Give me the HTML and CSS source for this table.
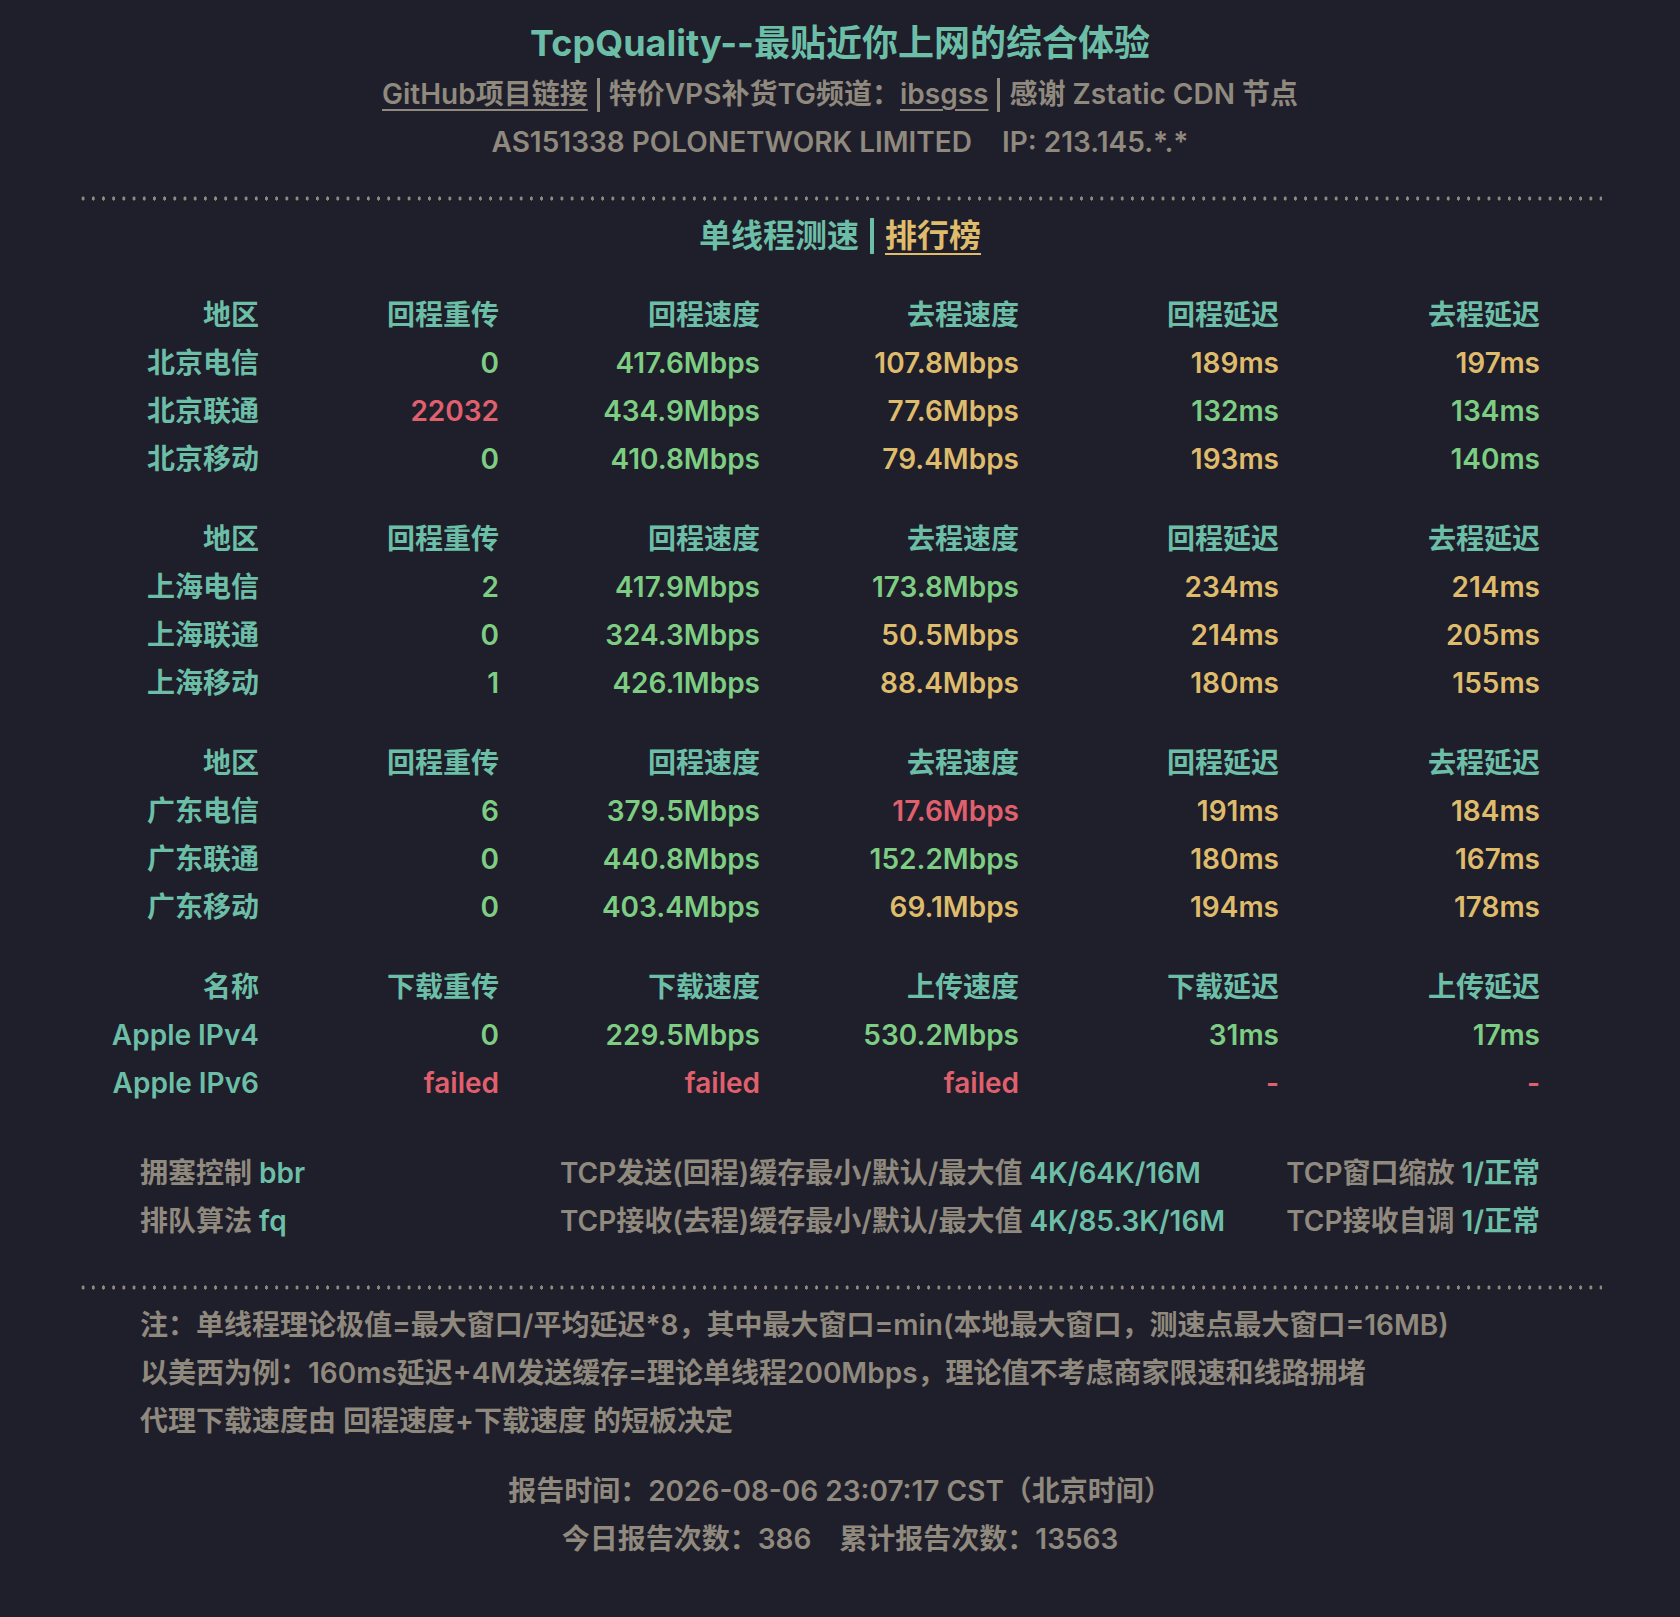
FILE: index.html
```html
<!DOCTYPE html>
<html lang="zh-CN">
<head>
<meta charset="utf-8">
<title>TcpQuality</title>
<link rel="stylesheet" href="styles.css">
</head>
<body>
<div class="page">
  <header class="head">
    <h1 class="title">TcpQuality--最贴近你上网的综合体验</h1>
    <p class="links"><a class="ulink">GitHub项目链接</a><span class="bar"></span>特价VPS补货TG频道：<a class="ulink">ibsgss</a><span class="bar"></span>感谢 Zstatic CDN 节点</p>
    <p class="asline">AS151338 POLONETWORK LIMITED<span class="ip">IP: 213.145.*.*</span></p>
  </header>

  <div class="dots"></div>

  <div class="tabs"><span class="tab">单线程测速</span><span class="tabbar"></span><a class="tab rank">排行榜</a></div>

  <section class="grid">
    <div class="h">地区</div><div class="h">回程重传</div><div class="h">回程速度</div><div class="h">去程速度</div><div class="h">回程延迟</div><div class="h">去程延迟</div>
    <div class="l">北京电信</div><div class="g">0</div><div class="g">417.6Mbps</div><div class="y">107.8Mbps</div><div class="y">189ms</div><div class="y">197ms</div>
    <div class="l">北京联通</div><div class="r">22032</div><div class="g">434.9Mbps</div><div class="y">77.6Mbps</div><div class="g">132ms</div><div class="g">134ms</div>
    <div class="l">北京移动</div><div class="g">0</div><div class="g">410.8Mbps</div><div class="y">79.4Mbps</div><div class="y">193ms</div><div class="g">140ms</div>
  </section>

  <section class="grid">
    <div class="h">地区</div><div class="h">回程重传</div><div class="h">回程速度</div><div class="h">去程速度</div><div class="h">回程延迟</div><div class="h">去程延迟</div>
    <div class="l">上海电信</div><div class="g">2</div><div class="g">417.9Mbps</div><div class="g">173.8Mbps</div><div class="y">234ms</div><div class="y">214ms</div>
    <div class="l">上海联通</div><div class="g">0</div><div class="g">324.3Mbps</div><div class="y">50.5Mbps</div><div class="y">214ms</div><div class="y">205ms</div>
    <div class="l">上海移动</div><div class="g">1</div><div class="g">426.1Mbps</div><div class="y">88.4Mbps</div><div class="y">180ms</div><div class="y">155ms</div>
  </section>

  <section class="grid">
    <div class="h">地区</div><div class="h">回程重传</div><div class="h">回程速度</div><div class="h">去程速度</div><div class="h">回程延迟</div><div class="h">去程延迟</div>
    <div class="l">广东电信</div><div class="g">6</div><div class="g">379.5Mbps</div><div class="r">17.6Mbps</div><div class="y">191ms</div><div class="y">184ms</div>
    <div class="l">广东联通</div><div class="g">0</div><div class="g">440.8Mbps</div><div class="g">152.2Mbps</div><div class="y">180ms</div><div class="y">167ms</div>
    <div class="l">广东移动</div><div class="g">0</div><div class="g">403.4Mbps</div><div class="y">69.1Mbps</div><div class="y">194ms</div><div class="y">178ms</div>
  </section>

  <section class="grid last">
    <div class="h">名称</div><div class="h">下载重传</div><div class="h">下载速度</div><div class="h">上传速度</div><div class="h">下载延迟</div><div class="h">上传延迟</div>
    <div class="l">Apple IPv4</div><div class="g">0</div><div class="g">229.5Mbps</div><div class="g">530.2Mbps</div><div class="g">31ms</div><div class="g">17ms</div>
    <div class="l">Apple IPv6</div><div class="r">failed</div><div class="r">failed</div><div class="r">failed</div><div class="r">-</div><div class="r">-</div>
  </section>

  <section class="conf">
    <div>拥塞控制 <span class="v">bbr</span></div>
    <div>TCP发送(回程)缓存最小/默认/最大值 <span class="v">4K/64K/16M</span></div>
    <div class="rc">TCP窗口缩放 <span class="v">1/正常</span></div>
    <div>排队算法 <span class="v">fq</span></div>
    <div>TCP接收(去程)缓存最小/默认/最大值 <span class="v">4K/85.3K/16M</span></div>
    <div class="rc">TCP接收自调 <span class="v">1/正常</span></div>
  </section>

  <div class="dots"></div>

  <section class="notes">
    <p>注：单线程理论极值=最大窗口/平均延迟*8，其中最大窗口=min(本地最大窗口，测速点最大窗口=16MB)</p>
    <p>以美西为例：160ms延迟+4M发送缓存=理论单线程200Mbps，理论值不考虑商家限速和线路拥堵</p>
    <p>代理下载速度由 回程速度+下载速度 的短板决定</p>
  </section>

  <footer class="report">
    <p>报告时间：2026-08-06 23:07:17 CST（北京时间）</p>
    <p>今日报告次数：386<span class="sep">累计报告次数：13563</span></p>
  </footer>
</div>
</body>
</html>
```

FILE: styles.css
```css
html, body {
  margin: 0;
  padding: 0;
  background: #1f1e2b;
}
body {
  font-family: Inter, "Noto Sans CJK SC", sans-serif;
  font-weight: 600;
  color: #8f897e;
  font-size: 28px;
}
p { margin: 0; }
.page {
  padding: 16px 78px 54px;
}
.head { text-align: center; }
.title {
  margin: 0;
  font-size: 36px;
  line-height: 54px;
  font-weight: 650;
  color: #6cbfa6;
}
.links, .asline {
  line-height: 48px;
}
.ulink {
  color: #8f897e;
  text-decoration: underline;
  text-decoration-thickness: 2px;
  text-underline-offset: 5px;
}
.bar {
  display: inline-block;
  width: 3px;
  height: 34px;
  background: #8f897e;
  margin: 0 9px;
  vertical-align: -8px;
}
.ip { margin-left: 30px; }
.dots {
  height: 5px;
  margin-top: 30px;
  background-image: radial-gradient(ellipse 1.5px 2.4px at 50% 50%, #8f897e 80%, transparent 100%);
  background-size: 10.2px 5px;
  background-repeat: repeat-x;
}
.tabs {
  text-align: center;
  font-size: 32px;
  line-height: 48px;
  margin-top: 11px;
  color: #6cbfa6;
}
.tabbar {
  display: inline-block;
  width: 4px;
  height: 36px;
  background: #6cbfa6;
  margin: 0 11px;
  vertical-align: -7px;
}
.rank {
  color: #dfbb6c;
  text-decoration: underline;
  text-decoration-thickness: 2px;
  text-underline-offset: 6px;
}
.grid {
  display: grid;
  grid-template-columns: 181px 240px 261px 259px 260px 261px;
  line-height: 48px;
  text-align: right;
  margin-top: 31px;
}
.grid + .grid { margin-top: 32px; }
.h, .l { color: #6cbfa6; }
.g { color: #7dcd82; }
.y { color: #dfbb6c; }
.r { color: #e0606d; }
.conf {
  display: grid;
  grid-template-columns: 420px 1fr auto;
  line-height: 48px;
  margin: 42px 62px 0 62px;
}
.rc { text-align: right; }
.v { color: #6cbfa6; }
.conf + .dots { margin-top: 40px; }
.notes {
  margin: 11px 0 0 62px;
  line-height: 48px;
}
.report {
  text-align: center;
  line-height: 48px;
  margin-top: 22px;
}
.sep { margin-left: 28px; }
```
